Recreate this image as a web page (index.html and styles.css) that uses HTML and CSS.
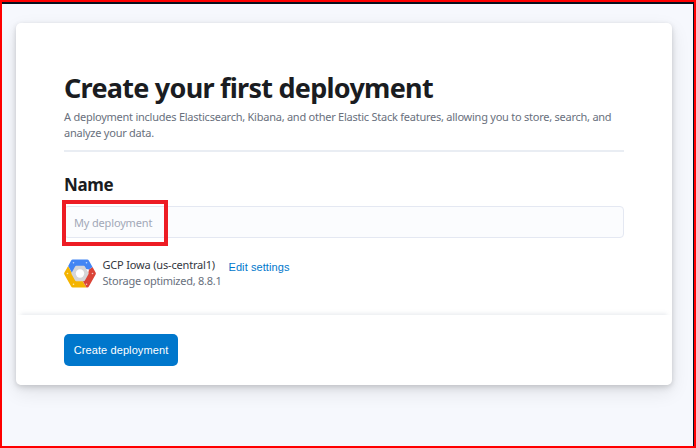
FILE: index.html
```html
<!DOCTYPE html>
<html lang="en">
<head>
<meta charset="utf-8">
<title>Create your first deployment</title>
<link rel="stylesheet" href="styles.css">
</head>
<body>
<div class="page">
  <main class="card">
    <section class="card-body">
      <h1 class="title">Create your first deployment</h1>
      <p class="intro">A deployment includes Elasticsearch, Kibana, and other Elastic Stack features, allowing you to store, search, and<br>analyze your data.</p>
      <hr class="rule">
      <h2 class="label">Name</h2>
      <div class="field"><span class="placeholder">My deployment</span><div class="highlight"></div></div>
      <div class="provider">
        <svg class="logo" width="32" height="29" viewBox="0 0 32 29">
          <path fill="#f4b400" d="M4.200 7L.4 13.400c-.4.700-.4 1.400 0 2.100L7 27.300c.4.800 1 1.200 1.800 1.200h13.700L18 21 8 14.500z"/>
          <path fill="#db4437" d="M25 10.500L28.500 8l3.100 5.400c.4.700.4 1.400 0 2.100L25 27.300c-.4.800-1 1.200-1.800 1.200h-.7L18.500 21.500 24 15z"/>
          <path fill="#4285f4" d="M8.800.5h14.400c.8 0 1.400.4 1.800 1.200L28.500 8 25 10.500 16 9 8.200 14.500 4.200 7 7 1.700C7.400.9 8 .5 8.800.5z"/>
          <path fill="#d5d5d7" d="M12.200 6.800h7.600c.5 0 .9.200 1.100.6l3.500 6.300c.3.500.3 1.100 0 1.600l-3.500 6.300c-.2.400-.6.600-1.100.6h-7.600c-.5 0-.9-.2-1.100-.6l-3.500-6.300c-.3-.5-.3-1.100 0-1.600l3.500-6.300c.2-.4.600-.6 1.100-.6z"/>
          <circle cx="16" cy="14.500" r="4.200" fill="#fff"/>
          <g fill="#fff" fill-opacity=".7"><circle cx="9.500" cy="3.800" r=".8"/><circle cx="22.500" cy="3.800" r=".8"/><circle cx="28.500" cy="14.500" r=".8"/><circle cx="22.500" cy="25.200" r=".8"/><circle cx="9.500" cy="25.200" r=".8"/><circle cx="3.500" cy="14.500" r=".8"/></g>
        </svg>
        <div class="details">
          <div class="region">GCP Iowa (us-central1)</div>
          <div class="profile">Storage optimized, 8.8.1</div>
        </div>
        <a class="edit">Edit settings</a>
      </div>
    </section>
    <footer class="card-footer">
      <button class="create">Create deployment</button>
    </footer>
  </main>
</div>
</body>
</html>
```
FILE: styles.css
```css
* { box-sizing: border-box; }
body { margin: 0; font-family: "Noto Sans", sans-serif; }
.page {
  width: 696px; height: 448px; overflow: hidden;
  border: 2px solid #f00;
  background: #f6f8fd;
  box-shadow: inset 0 2px #07101f, inset -1px 0 #07101f;
  padding: 20.500px 22px 0 14px;
}
.card {
  height: 362.500px; background: #fff; border-radius: 5px;
  box-shadow: 0 1px 4px rgba(0,0,0,.08), 0 3px 7px rgba(0,0,0,.1), 0 7px 19px rgba(0,0,0,.09);
}
.card-body { height: 292.500px; padding: 48.500px 48px 0; }
.title { margin: 0; font-size: 27px; line-height: 34px; font-weight: 700; color: #1a1c21; white-space: nowrap; letter-spacing: -.74px; }
.intro { margin: 4px 0 0; font-size: 11px; line-height: 16px; color: #69707d; white-space: nowrap; letter-spacing: -.245px; }
.rule { margin: 9px 0 0; height: 2px; border: 0; background: #e9edf3; }
.label { margin: 21px 0 0; font-size: 17px; line-height: 24px; font-weight: 700; color: #1a1c21; letter-spacing: -.4px; }
.field { position: relative; margin-top: 9px; height: 32px; border: 1px solid #e4e8f2; border-radius: 4px; background: #fbfcfe; padding-left: 9px; line-height: 31px; font-size: 11px; color: #a2a8b7; letter-spacing: -.16px; }
.highlight { position: absolute; left: -3px; top: -7px; width: 106px; height: 46px; border: 4px solid #ed1c24; }
.provider { display: flex; margin-top: 20px; }
.logo { margin-top: 1px; }
.details { margin: -1px 0 0 6.500px; width: 126px; font-size: 11px; line-height: 16px; white-space: nowrap; color: #343741; }
.region { letter-spacing: -.18px; }
.profile { color: #69707d; letter-spacing: -.25px; }
.edit { font: 11px/16px "Liberation Sans", sans-serif; color: #0077cc; margin-top: 1px; letter-spacing: .08px; }
.card-footer { height: 70px; margin: 0 1px; padding: 19px 47px; background: #fff; border-radius: 0 0 5px 5px; box-shadow: 0 -5px 4px -4px rgba(152,162,179,.25); }
.create { display: block; width: 114px; height: 32px; padding: 0; border: 0; border-radius: 5px; background: #0077cc; color: #fff; font: 11px/32px "Liberation Sans", sans-serif; letter-spacing: .1px; }
```
